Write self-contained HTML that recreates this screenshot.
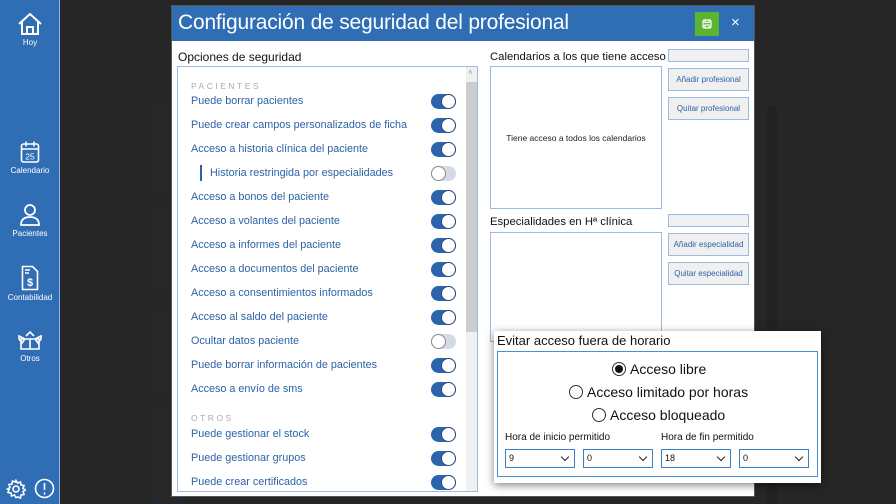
<!DOCTYPE html>
<html><head><meta charset="utf-8"><style>
*{margin:0;padding:0;box-sizing:border-box}
body{width:896px;height:504px;background:#262626;position:relative;overflow:hidden;font-family:"Liberation Sans",sans-serif}
.abs{position:absolute}
.side{left:0;top:0;width:60px;height:504px;background:#2f6db4;border-right:1px solid #8fb4e0}
.nav{position:absolute;left:0;width:60px;text-align:center;color:#fff;font-size:8px}
.nav svg{display:block;margin:0 auto 2px}
.bg{position:absolute;left:153px;width:30px;border:1px solid #1e2a38;background:#272727}
.dlg{left:171px;top:5px;width:584px;height:492px;background:#fff;border:1px solid #555}
.title{left:0;top:0;width:582px;height:35px;background:#2f6db4;color:#fff;font-size:21px;padding:5px 0 0 6px;font-weight:300;white-space:nowrap;letter-spacing:-0.2px}
.lbl{font-size:12px;color:#111}
.list{left:5px;top:60px;width:301px;height:426px;border:1px solid #9bbce0}
.row{position:absolute;left:13px;font-size:10.8px;color:#2c62a8;white-space:nowrap}
.sec{position:absolute;left:13px;font-size:8.5px;letter-spacing:2.5px;color:#aaa}
.tg{position:absolute;left:253px;width:25px;height:15px;border-radius:8px;background:#2a64ad}
.tg::after{content:"";position:absolute;right:0;top:0;width:15px;height:15px;border-radius:50%;background:#fff;border:1.5px solid #2a4d7d;box-sizing:border-box}
.tg.off{background:#d5dbe5}
.tg.off::after{left:0;right:auto;border-color:#888}
.box{border:1px solid #9bbce0;background:#fff}
.btn{position:absolute;left:496px;width:81px;height:23px;border:1px solid #9bbce0;background:#f0f0f0;color:#2c62a8;font-size:8px;text-align:center;line-height:21px;white-space:nowrap}
.sel{position:absolute;left:496px;width:81px;height:13px;border:1px solid #9bbce0;background:#f0f0f0}
.pop{left:494px;top:331px;width:327px;height:152px;background:#fff;box-shadow:0 2px 8px rgba(0,0,0,.5)}
.radio{position:absolute;font-size:14px;color:#111;white-space:nowrap}
.radio i{display:inline-block;width:14px;height:14px;border:1px solid #333;border-radius:50%;vertical-align:-2px;margin-right:4px;position:relative}
.radio i.on::after{content:"";position:absolute;left:2px;top:2px;width:8px;height:8px;border-radius:50%;background:#111}
.dd{position:absolute;top:118px;width:70px;height:19px;border:1px solid #3a7fc4;font-size:9px;padding:3px 0 0 3px;color:#111}
.dd::after{content:"";position:absolute;right:6px;top:4px;width:5px;height:5px;border-right:1.3px solid #222;border-bottom:1.3px solid #222;transform:rotate(45deg)}
</style></head><body>
<div class="abs side">
 <div class="nav" style="top:12px"><svg width="26" height="24" viewBox="0 0 26 24" fill="none" stroke="#fff" stroke-width="2"><path d="M2 12 13 2l11 10M5 10v12h16V10M10 22v-7h6v7"/></svg>Hoy</div>
 <div class="nav" style="top:140px"><svg width="20" height="24" viewBox="0 0 20 24" fill="none" stroke="#fff" stroke-width="1.6"><rect x="1.5" y="4" width="17" height="18" rx="2"/><path d="M1.5 9h17M6 1.5v5M14 1.5v5"/><text x="10" y="19.5" fill="#fff" stroke="none" font-size="8.5" text-anchor="middle" font-family="Liberation Sans">25</text></svg>Calendario</div>
 <div class="nav" style="top:203px"><svg width="22" height="24" viewBox="0 0 22 24" fill="none" stroke="#fff" stroke-width="1.8"><circle cx="11" cy="7" r="5"/><path d="M2 22c0-6 4-8 9-8s9 2 9 8z"/></svg>Pacientes</div>
 <div class="nav" style="top:265px"><svg width="18" height="26" viewBox="0 0 18 26" fill="none" stroke="#fff" stroke-width="1.6"><path d="M1.5 1.5h10l5 5v18h-15z"/><path d="M4 5h5M4 8h4"/><text x="9" y="21" fill="#fff" stroke="none" font-size="11" font-weight="bold" text-anchor="middle" font-family="Liberation Sans">$</text></svg>Contabilidad</div>
 <div class="nav" style="top:330px"><svg width="24" height="22" viewBox="0 0 24 22" fill="none" stroke="#fff" stroke-width="1.6"><path d="M3 9h18v10H3zM1 6l6 3-3 4-3-4zM23 6l-6 3 3 4 3-4zM8 6l4-4 4 4M12 9v10"/></svg>Otros</div>
 <svg class="abs" style="left:6px;top:479px" width="20" height="20" viewBox="0 0 20 20" fill="none" stroke="#fff" stroke-width="1.6"><circle cx="10" cy="10" r="3"/><path d="M10 1.5l1.5 2.5 3-1 .5 3 3 .5-1 3 2.5 1.5-2.5 1.5 1 3-3 .5-.5 3-3-1L10 18.5 8.5 16l-3 1-.5-3-3-.5 1-3L1.5 10 4 8.5l-1-3 3-.5.5-3 3 1z"/></svg>
 <svg class="abs" style="left:34px;top:478px" width="21" height="21" viewBox="0 0 21 21" fill="none" stroke="#fff" stroke-width="1.6"><circle cx="10.5" cy="10.5" r="9"/><path d="M10.5 5v7M10.5 14.5v2"/></svg>
</div>
<div class="bg" style="top:102px;height:90px"></div>
<div class="bg" style="top:204px;height:90px"></div>
<div class="bg" style="top:307px;height:90px"></div>
<div class="bg" style="top:409px;height:95px"></div>
<div class="abs" style="left:767px;top:106px;width:10px;height:398px;background:#222"></div>
<div class="abs dlg">
 <div class="abs title">Configuración de seguridad del profesional</div>
 <div class="abs" style="left:523px;top:6px;width:24px;height:24px;background:#5cb531"><svg width="24" height="24" viewBox="0 0 24 24" fill="none" stroke="#fff" stroke-width="1.3"><rect x="8" y="8" width="8" height="8" rx="1.5"/><path d="M10 8v2.5h4V8M10 16v-3h4v3"/></svg></div>
 <div class="abs" style="left:559px;top:8px;color:#fff;font-size:15px">×</div>
 <div class="abs lbl" style="left:6px;top:44px">Opciones de seguridad</div>
 <div class="abs list">
  <div class="abs" style="left:288px;top:0;width:11px;height:424px;background:#f0f0f0"></div>
  <div class="abs" style="left:288px;top:15px;width:11px;height:250px;background:#cdcdcd"></div>
  <div class="abs" style="left:290px;top:1px;font-size:8px;color:#999">˄</div>
  <div class="sec" style="top:14px">PACIENTES</div>
  <div class="row" style="top:28px">Puede borrar pacientes</div><div class="tg" style="top:27px"></div>
  <div class="row" style="top:52px">Puede crear campos personalizados de ficha</div><div class="tg" style="top:51px"></div>
  <div class="row" style="top:76px">Acceso a historia clínica del paciente</div><div class="tg" style="top:75px"></div>
  <div class="abs" style="left:22px;top:98px;width:1.5px;height:16px;background:#2c62a8"></div>
  <div class="row" style="top:100px;left:32px">Historia restringida por especialidades</div><div class="tg off" style="top:99px"></div>
  <div class="row" style="top:124px">Acceso a bonos del paciente</div><div class="tg" style="top:123px"></div>
  <div class="row" style="top:148px">Acceso a volantes del paciente</div><div class="tg" style="top:147px"></div>
  <div class="row" style="top:172px">Acceso a informes del paciente</div><div class="tg" style="top:171px"></div>
  <div class="row" style="top:196px">Acceso a documentos del paciente</div><div class="tg" style="top:195px"></div>
  <div class="row" style="top:220px">Acceso a consentimientos informados</div><div class="tg" style="top:219px"></div>
  <div class="row" style="top:244px">Acceso al saldo del paciente</div><div class="tg" style="top:243px"></div>
  <div class="row" style="top:268px">Ocultar datos paciente</div><div class="tg off" style="top:267px"></div>
  <div class="row" style="top:292px">Puede borrar información de pacientes</div><div class="tg" style="top:291px"></div>
  <div class="row" style="top:316px">Acceso a envío de sms</div><div class="tg" style="top:315px"></div>
  <div class="sec" style="top:346px">OTROS</div>
  <div class="row" style="top:361px">Puede gestionar el stock</div><div class="tg" style="top:360px"></div>
  <div class="row" style="top:385px">Puede gestionar grupos</div><div class="tg" style="top:384px"></div>
  <div class="row" style="top:409px">Puede crear certificados</div><div class="tg" style="top:408px"></div>
 </div>
 <div class="abs lbl" style="left:318px;top:45px;font-size:11.3px">Calendarios a los que tiene acceso</div>
 <div class="abs box" style="left:318px;top:60px;width:172px;height:143px"><div style="text-align:center;font-size:8.5px;color:#222;margin-top:66px">Tiene acceso a todos los calendarios</div></div>
 <div class="sel" style="top:43px"></div>
 <div class="btn" style="top:62px">Añadir profesional</div>
 <div class="btn" style="top:91px">Quitar profesional</div>
 <div class="abs lbl" style="left:318px;top:210px;font-size:11.3px">Especialidades en Hª clínica</div>
 <div class="abs box" style="left:318px;top:226px;width:172px;height:110px"></div>
 <div class="sel" style="top:208px"></div>
 <div class="btn" style="top:227px">Añadir especialidad</div>
 <div class="btn" style="top:256px">Quitar especialidad</div>
</div>
<div class="abs pop">
 <div class="abs" style="left:3px;top:2px;font-size:13px;color:#111">Evitar acceso fuera de horario</div>
 <div class="abs" style="left:3px;top:20px;width:321px;height:126px;border:1.5px solid #4a90d0"></div>
 <div class="radio" style="left:118px;top:30px"><i class="on"></i>Acceso libre</div>
 <div class="radio" style="left:75px;top:53px"><i></i>Acceso limitado por horas</div>
 <div class="radio" style="left:98px;top:76px"><i></i>Acceso bloqueado</div>
 <div class="abs" style="left:11px;top:101px;font-size:10px;color:#111">Hora de inicio permitido</div>
 <div class="abs" style="left:167px;top:101px;font-size:10px;color:#111">Hora de fin permitido</div>
 <div class="dd" style="left:11px">9</div>
 <div class="dd" style="left:89px">0</div>
 <div class="dd" style="left:167px">18</div>
 <div class="dd" style="left:245px">0</div>
</div>
</body></html>
